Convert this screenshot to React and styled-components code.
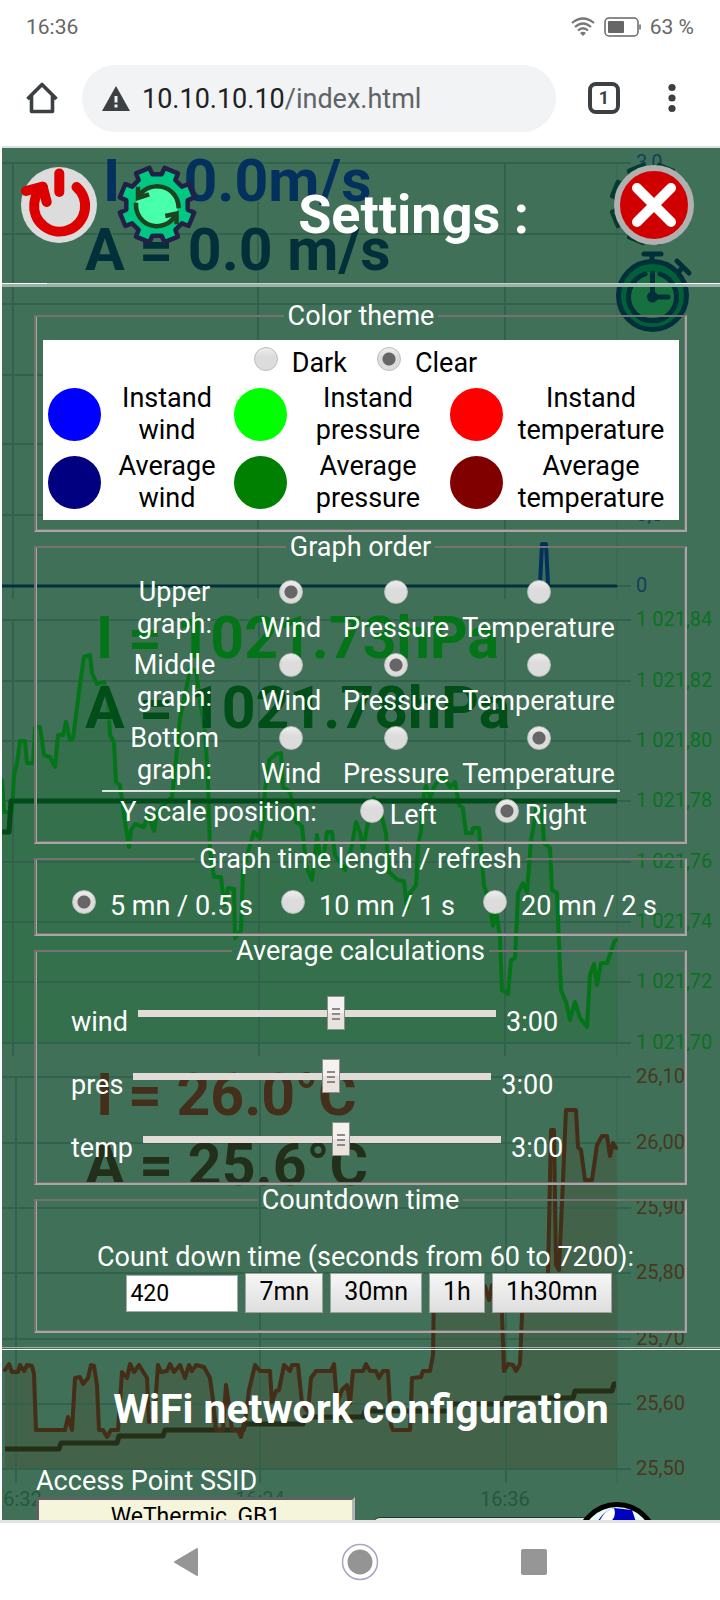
import React, { useState } from "react";
import styled, { createGlobalStyle } from "styled-components";

const GlobalStyle = createGlobalStyle`
  *, *::before, *::after { box-sizing: border-box; }
  body { margin: 0; background: #fff; font-family: Roboto, "Liberation Sans", sans-serif; }
`;

/* ---------- phone and browser chrome ---------- */

const Phone = styled.div`
  display: flex;
  flex-direction: column;
  height: 100vh;
  background: #fff;
`;

const StatusBar = styled.div`
  display: flex;
  align-items: center;
  justify-content: space-between;
  height: 54px;
  padding: 0 26px;
  color: #666;
  font-size: 21px;
  flex: none;
`;

const StatusGroup = styled.div`
  display: flex;
  align-items: center;
  gap: 9px;
`;

const BrowserBar = styled.div`
  display: flex;
  align-items: center;
  height: 92px;
  padding: 0 32px 4px 26px;
  flex: none;
`;

const ChromeButton = styled.button`
  display: flex;
  align-items: center;
  justify-content: center;
  width: 32px;
  height: 36px;
  padding: 0;
  border: 0;
  background: none;
  flex: none;
`;

const AddressPill = styled.div`
  display: flex;
  align-items: center;
  gap: 12px;
  flex: 1;
  height: 67px;
  margin: 0 32px 0 24px;
  padding: 2px 0 0 20px;
  border-radius: 34px;
  background: #f1f3f4;
  font-size: 27px;
  color: #5f6368;
`;

const Host = styled.span`
  color: #202124;
`;

const TabCount = styled.button`
  width: 32px;
  height: 32px;
  margin-right: 36px;
  padding: 0;
  border: 4px solid #3c4043;
  border-radius: 8px;
  background: none;
  color: #3c4043;
  font: 700 18px/24px Roboto, sans-serif;
  flex: none;
`;

const NavBar = styled.nav`
  display: flex;
  align-items: center;
  justify-content: center;
  gap: 142px;
  height: 80px;
  border-top: 3px solid #e2e2e2;
  flex: none;
`;

const NavButton = styled.button`
  display: flex;
  padding: 0;
  border: 0;
  background: none;
`;

/* ---------- settings page ---------- */

const View = styled.main`
  position: relative;
  flex: 1;
  min-height: 0;
  margin-left: 2px;
  overflow: hidden;
  border-top: 2px solid #dcdfdc;
  background: #417058;
  color: #fff;
  font-size: 27px;
  line-height: 32px;
`;

const Backdrop = styled.svg`
  position: absolute;
  inset: 0;
  width: 100%;
  height: 100%;
`;

const Sheet = styled.div`
  position: relative;
`;

const Header = styled.header`
  display: flex;
  align-items: flex-start;
  gap: 20px;
  height: 135px;
  padding: 17px 26px 0 19px;
`;

const IconButton = styled.button`
  display: flex;
  align-items: center;
  height: 80px;
  padding: 0;
  border: 0;
  background: none;
  flex: none;
`;

const Title = styled.h1`
  flex: 1;
  margin: 0;
  padding: 20px 0 0 16px;
  text-align: center;
  font-size: 54px;
  line-height: 60px;
  font-weight: 700;
`;

const HeaderRule = styled.hr`
  height: 4px;
  margin: 0;
  border: 0;
  background:
    linear-gradient(#fff, #fff) left top / 45px 1px no-repeat,
    linear-gradient(#fff, #fff) right top / 45px 1px no-repeat,
    linear-gradient(#c6d4cc 1px, #9bb3a6 1px);
`;

const Rule = styled.hr`
  height: 3px;
  margin: 0;
  border: 0;
  border-top: 1px solid #a0b5aa;
  border-bottom: 1px solid #fff;
`;

const Sections = styled.div`
  padding: 14px 33px 14px 32px;
`;

const Group = styled.fieldset`
  margin: 0;
  padding: ${(p) => p.$pad};
  border: 3px groove #b4b0b0;
  border-color: #757272 #aaa6a6 #aaa6a6 #757272;
  border-style: solid;
  border-width: 2px;
  box-shadow: inset 1px 0 #aaa6a6, inset -1px 0 #757272, inset 0 -1px #757272;
  min-width: 0;
`;

const Legend = styled.legend`
  margin: 0 auto;
  padding: 0 4px;
  line-height: 30px;
`;

const Radio = styled.input.attrs({ type: "radio" })`
  appearance: none;
  width: 24px;
  height: 24px;
  margin: 0;
  border: 1px solid #bcbcbc;
  border-radius: 50%;
  background: ${(p) =>
    p.checked
      ? "radial-gradient(circle, #666 0 6px, transparent 7px), linear-gradient(#eee, #dcdcdc 40%)"
      : "linear-gradient(#eee, #dcdcdc 40%)"};
  flex: none;
`;

const Choice = styled.label`
  display: flex;
  align-items: flex-start;
  gap: ${(p) => p.$gap}px;
`;

const ChoiceRow = styled.div`
  display: flex;
  justify-content: center;
  gap: ${(p) => p.$gap}px;
  padding: ${(p) => p.$pad};
`;

const ThemePanel = styled.div`
  height: 180px;
  background: #fff;
  color: #000;
`;

const SwatchGrid = styled.div`
  display: grid;
  grid-template-columns: 62fr 124fr 62fr 154fr 62fr 168fr;
  grid-auto-rows: 68px;
  align-items: center;
  justify-items: center;
  padding-right: 4px;
  text-align: center;
`;

const Swatch = styled.button`
  width: 53px;
  height: 53px;
  padding: 0;
  border: 0;
  border-radius: 50%;
  background: ${(p) => p.$color};
`;

const SwatchLabel = styled.span`
  width: min-content;
`;

const OrderTable = styled.div`
  display: flex;
  flex-direction: column;
  gap: 5px;
  width: 518px;
  max-width: 100%;
  margin: 0 auto;
  border-bottom: 2px solid #dbe5df;
`;

const OrderRow = styled.div`
  display: grid;
  grid-template-columns: 146fr 87fr 123fr 162fr;
  justify-items: center;
  text-align: center;
`;

const RowName = styled.span`
  width: min-content;
`;

const StackedChoice = styled.label`
  display: flex;
  flex-direction: column;
  align-items: center;
  gap: 8px;
  padding-top: 4px;
`;

const ScaleRow = styled.div`
  display: flex;
  justify-content: center;
  padding: 7px 14px 0 0;
`;

const ScaleName = styled.span`
  margin: -3px 43px 0 0;
`;

const ScaleChoice = styled(Choice)`
  margin-right: ${(p) => p.$after || 0}px;
`;

const Sliders = styled.div`
  display: flex;
  flex-direction: column;
  gap: 22px;
`;

const SliderRow = styled.label`
  display: flex;
  align-items: flex-start;
  gap: 10px;
  height: 41px;
`;

const SliderText = styled.span`
  padding-top: 10px;
`;

const Slider = styled.input.attrs({ type: "range" })`
  appearance: none;
  flex: 0 1 358px;
  min-width: 0;
  height: 34px;
  margin: 0;
  background: none;

  &::-webkit-slider-runnable-track {
    height: 7px;
    background: #e2dcd8;
  }

  &::-webkit-slider-thumb {
    appearance: none;
    width: 18px;
    height: 34px;
    margin-top: -14px;
    border: 1px solid #958d88;
    background:
      linear-gradient(#8f8883, #8f8883) center 11px / 8px 2px no-repeat,
      linear-gradient(#8f8883, #8f8883) center 16px / 8px 2px no-repeat,
      linear-gradient(#8f8883, #8f8883) center 21px / 8px 2px no-repeat,
      linear-gradient(#f4f2f0 50%, #e9e3e0 50%);
  }
`;

const CountLabel = styled.label`
  display: block;
  padding-left: 10px;
  text-align: center;
`;

const CountRow = styled.div`
  display: flex;
  align-items: center;
  justify-content: center;
  gap: 7px;
  padding-left: 17px;
`;

const NumberBox = styled.input`
  width: 112px;
  height: 37px;
  padding: 0 3px;
  border: 1px solid #a9a9a9;
  background: #fff;
  color: #000;
  font: 23px Roboto, sans-serif;
`;

const PresetButton = styled.button`
  height: 40px;
  padding: 0 13px 3px;
  border: 1px solid #a0a0a0;
  background: linear-gradient(#f6f6f6, #dedede);
  color: #000;
  font: 25px Roboto, sans-serif;
`;

const WifiTitle = styled.h2`
  margin: 35px 0 32px;
  text-align: center;
  font-size: 41px;
  line-height: 48px;
  font-weight: 700;
`;

const SsidLabel = styled.label`
  display: block;
  padding-left: 34px;
`;

const SsidRow = styled.div`
  display: flex;
  align-items: flex-start;
  padding-left: 34px;
`;

const SsidInput = styled.input`
  width: 319px;
  height: 38px;
  border: 3px inset #b4b4b4;
  background: #f5f5dc;
  color: #000;
  text-align: center;
  font: 23px Roboto, sans-serif;
`;

const SsidButton = styled.button`
  width: 237px;
  height: 40px;
  margin: 20px 0 0 17px;
  border: 1px solid #12402c;
  border-radius: 8px;
  background: #e4e4e4;
`;

const GlobeButton = styled(IconButton)`
  margin: 6px 0 0 -33px;
`;

/* ---------- icons ---------- */

const GEAR = (() => {
  const pts = [];
  for (let i = 0; i < 8; i++) {
    const mid = i * 45 + 22.5;
    [[-14, 31], [-11, 38], [11, 38], [14, 31]].forEach(([d, r]) => {
      const a = ((mid + d) * Math.PI) / 180;
      pts.push(`${(40 + r * Math.sin(a)).toFixed(1)},${(40 - r * Math.cos(a)).toFixed(1)}`);
    });
  }
  return `M${pts.join("L")}Z`;
})();

const PowerIcon = () => (
  <svg width="76" height="76" viewBox="0 0 76 76" aria-hidden="true">
    <circle cx="38" cy="38" r="38" fill="#dcdcdc" />
    <g fill="none" stroke="#dc0000" strokeWidth="10" strokeLinecap="round" strokeLinejoin="round">
      <path d="M38.3 6.5V25" />
      <path d="M55.5 20A25.5 25.5 0 1 1 13.3 36Q14.500 26 21.700 19.700" />
      <path d="M5 24L21.700 19.700L25.700 35" />
    </g>
  </svg>
);

const GearIcon = () => (
  <svg width="80" height="80" viewBox="0 0 80 80" overflow="visible" aria-hidden="true">
    <path d={GEAR} fill="#00c781" stroke="#232048" strokeWidth="4.500" strokeLinejoin="round" />
    <circle cx="40" cy="40" r="21" fill="#48ffaa" />
    <g fill="none" stroke="#1d4420" strokeWidth="4.500" strokeLinecap="square">
      <path d="M61.500 41A21.500 21.500 0 0 0 22 31" />
      <path d="M21 24V33L30 30" />
      <path d="M19 40A21 21 0 0 0 58 51" />
      <path d="M59.500 57V48.500L50.500 50.500" />
    </g>
  </svg>
);

const CloseIcon = () => (
  <svg width="80" height="80" viewBox="0 0 80 80" aria-hidden="true">
    <circle cx="40" cy="40" r="37" fill="#d00000" stroke="#b0b0b0" strokeWidth="6" />
    <path d="M23 23L57 57M57 23L23 57" stroke="#fff" strokeWidth="10" strokeLinecap="round" />
  </svg>
);

const GlobeIcon = () => (
  <svg width="82" height="82" viewBox="0 0 82 82" aria-hidden="true">
    <circle cx="41" cy="41" r="38.500" fill="#e8fbf2" stroke="#000" strokeWidth="5" />
    <path d="M20 22Q28 8 38 6L56 8L60 20L50 40H24Z" fill="#0000c0" />
    <path d="M24 18Q30 7 38 6Q41 15 34 20Z" fill="#fff" />
  </svg>
);

const HomeIcon = () => (
  <svg width="32" height="32" viewBox="0 0 32 32" fill="none" stroke="#3c4043" strokeWidth="3.600" aria-hidden="true">
    <path d="M1.500 17L16 2.500L30.500 17M5.500 14V29.500H26.500V14" strokeLinejoin="round" />
  </svg>
);

const WarnIcon = () => (
  <svg width="28" height="26" viewBox="0 0 28 26" aria-hidden="true">
    <path d="M14 0L28 25H0Z" fill="#3c4043" />
    <path d="M14 10V16.500M14 18.500V21.500" stroke="#f1f3f4" strokeWidth="3" />
  </svg>
);

const WifiIcon = () => (
  <svg width="24" height="20" viewBox="0 0 24 20" fill="none" stroke="#777" strokeWidth="2.200" aria-hidden="true">
    <path d="M1 6Q12 -3 23 6M4 10Q12 3 20 10M7 13.500Q12 9 17 13.500" />
    <path d="M9 16Q12 13.500 15 16L12 19Z" fill="#777" stroke="none" />
  </svg>
);

const BatteryIcon = () => (
  <svg width="37" height="20" viewBox="0 0 37 20" aria-hidden="true">
    <rect x="1" y="1" width="33" height="18" rx="4" fill="none" stroke="#666" strokeWidth="1.500" />
    <rect x="4" y="4" width="16" height="12" rx="1" fill="#666" />
    <path d="M36 7.500V12.500" stroke="#666" strokeWidth="1.500" />
  </svg>
);

/* ---------- charts behind the settings sheet ---------- */

const PRESSURE =
  "2,780 4,812 12,812 14,775 17,763 20,741 25,741 27,763 33,763 35,727 40,727 44,755 50,757 55,767 58,735 63,735 66,722 70,740 73,738 77,708 80,684 84,657 90,655 92,673 97,684 104,682 108,700 110,735 114,742 116,782 120,785 124,815 129,847 131,830 135,824 144,827 148,815 154,831 157,813 165,803 172,797 176,760 180,718 186,690 190,669 196,671 200,700 205,732 208,780 210,850 214,877 221,877 224,905 228,888 234,889 235,938 241,930 243,870 250,845 254,832 260,838 263,820 265,790 269,760 276,754 281,753 283,787 290,792 296,822 302,826 306,865 312,880 317,835 322,868 327,832 332,832 335,855 345,870 352,845 356,822 360,832 363,850 370,810 374,798 380,810 386,833 389,872 398,880 404,881 407,908 410,893 416,885 418,846 421,830 424,793 426,786 430,798 434,787 442,775 450,787 455,782 459,805 463,808 466,833 472,833 473,828 479,828 481,850 484,885 490,905 493,926 496,910 500,938 502,990 508,994 511,960 515,958 518,893 523,883 527,892 531,840 533,830 536,808 542,810 544,843 550,848 552,890 557,893 559,943 561,990 566,1002 570,1020 575,1002 580,1018 587,1027 590,975 594,964 597,985 601,963 607,963 611,952 614,942 616,940";

const TEMPERATURE =
  "5,1370 9,1364 12,1372 18,1372 20,1365 24,1371 27,1365 32,1366 34,1374 36,1430 65,1430 68,1417 72,1430 75,1378 80,1377 83,1384 88,1378 91,1365 94,1366 97,1385 99,1430 103,1430 107,1437 111,1430 118,1430 122,1372 127,1378 130,1364 134,1372 139,1365 147,1378 149,1422 154,1420 158,1365 161,1372 167,1371 170,1364 174,1372 180,1365 185,1378 189,1365 192,1371 196,1365 204,1367 210,1378 213,1400 216,1430 223,1430 226,1385 229,1405 232,1430 238,1430 241,1437 246,1415 249,1390 255,1365 260,1371 270,1371 272,1402 276,1391 279,1390 284,1365 290,1371 292,1365 298,1365 302,1403 308,1412 311,1378 316,1371 331,1371 334,1364 337,1403 342,1390 347,1385 350,1403 353,1371 363,1371 366,1364 370,1371 376,1371 379,1378 383,1371 388,1371 391,1425 393,1430 410,1430 412,1378 421,1377 423,1371 430,1371 433,1355 434,1290 440,1286 485,1286 489,1300 492,1285 501,1285 504,1371 508,1364 513,1365 516,1371 520,1364 523,1290 540,1285 548,1275 551,1130 554,1130 556,1265 559,1270 563,1180 566,1110 576,1110 578,1147 581,1150 585,1180 592,1180 597,1145 602,1136 607,1136 610,1156 613,1143 616,1148";

const CHARTS = [
  {
    rows: [163, 234, 304, 375, 444, 515, 586], cols: [13, 258, 505, 617], bottom: 599, color: "#12405c",
    labels: [["3,0", 163], ["0,5", 515], ["0", 586]],
  },
  {
    rows: [620, 681, 741, 801, 862, 922, 982, 1043], cols: [13, 259, 505, 617], bottom: 1056, color: "#0c7022",
    labels: [
      ["1 021,84", 620], ["1 021,82", 681], ["1 021,80", 741], ["1 021,78", 801],
      ["1 021,76", 862], ["1 021,74", 922], ["1 021,72", 982], ["1 021,70", 1043],
    ],
  },
  {
    rows: [1077, 1143, 1208, 1273, 1339, 1404, 1469], cols: [16, 260, 506, 617], bottom: 1483, color: "#49371e",
    labels: [
      ["26,10", 1077], ["26,00", 1143], ["25,90", 1208], ["25,80", 1273],
      ["25,70", 1339], ["25,60", 1404], ["25,50", 1469],
    ],
  },
];

const READINGS = [
  [103, 201, "#03305c", "I = 0.0m/s"],
  [85, 270, "#01303a", "A = 0.0 m/s"],
  [96, 658, "#037518", "I = 1021.73hPa"],
  [85, 728, "#014f18", "A = 1021.78hPa"],
  [96, 1115, "#432f1b", "I = 26.0°C"],
  [85, 1185, "#22301b", "A = 25.6°C"],
];

const Charts = () => (
  <Backdrop viewBox="2 148 718 1372" preserveAspectRatio="xMinYMin slice" fontFamily="Roboto, sans-serif">
    <polygon points={`2,1043 ${PRESSURE} 617,1043`} fill="#34704c" />
    <polygon points={`5,1469 ${TEMPERATURE} 617,1469`} fill="#42624a" />
    {CHARTS.map((c) => (
      <g key={c.bottom} stroke="#32624b" strokeWidth="2">
        {c.rows.map((y) => <path key={y} d={`M2 ${y}H631`} />)}
        {c.cols.map((x) => <path key={x} d={`M${x} ${c.rows[0]}V${c.bottom}`} strokeOpacity={x === 617 ? 0.35 : 1} />)}
      </g>
    ))}
    <g fill="none" strokeLinejoin="round" strokeLinecap="round">
      <path d="M540 585L542 544H546L548 585" stroke="#03305c" strokeWidth="4" />
      <path d="M2 586H616" stroke="#02303c" strokeWidth="3" />
      <polyline points={PRESSURE} stroke="#037518" strokeWidth="4" />
      <path d="M2 832H9L11 801H617" stroke="#014b18" strokeWidth="5" strokeLinecap="butt" />
      <path
        d="M5 1449H59L61 1443H117L119 1436H163L165 1430H243L245 1424H303L305 1417H363L365 1411H450L452 1404H504L506 1398H573L575 1391H612L614 1384H616"
        stroke="#252f17" strokeWidth="5" strokeLinecap="butt"
      />
      <polyline points={TEMPERATURE} stroke="#452e18" strokeWidth="4" />
    </g>
    <g fontSize="59" fontWeight="700" stroke="#417058" strokeOpacity="0.4" strokeWidth="4" paintOrder="stroke">
      {READINGS.map(([x, y, fill, text]) => <text key={text} x={x} y={y} fill={fill}>{text}</text>)}
    </g>
    <g fontSize="20">
      {CHARTS.map((c) => c.labels.map(([text, y]) => (
        <text key={text} x="636" y={y + 6} fill={c.color}>{text}</text>
      )))}
      <g fill="#24583e">
        <text x="-8" y="1506">16:32</text>
        <text x="235" y="1506">16:34</text>
        <text x="480" y="1506">16:36</text>
      </g>
    </g>
    <g transform="translate(609 162) scale(1.05)">
      <path d={GEAR} fill="none" stroke="#063c2c" strokeWidth="4" strokeLinejoin="round" />
    </g>
    <g fill="none" stroke="#02303a" strokeWidth="5" strokeLinecap="round">
      <path d="M644 254H661M652 254V262" />
      <path d="M677 261L689 273M683 267L676 275" />
      <circle cx="652.500" cy="295.500" r="34" fill="#00603a" />
      <circle cx="652.500" cy="296" r="24" fill="#17713f" stroke="none" />
      <path d="M645 274A24 24 0 1 0 660 274" />
      <path d="M652.500 273V297H668" />
      <circle cx="652.500" cy="297" r="3" fill="#02303a" />
    </g>
  </Backdrop>
);

/* ---------- application ---------- */

const SWATCHES = [
  ["Instand wind", "#0000ff"], ["Instand pressure", "#00ff00"], ["Instand temperature", "#ff0000"],
  ["Average wind", "#000080"], ["Average pressure", "#008000"], ["Average temperature", "#800000"],
];
const SERIES = ["Wind", "Pressure", "Temperature"];
const PRESETS = [["7mn", 420], ["30mn", 1800], ["1h", 3600], ["1h30mn", 5400]];

export default function App() {
  const [theme, setTheme] = useState("Clear");
  const [order, setOrder] = useState({ Upper: "Wind", Middle: "Pressure", Bottom: "Temperature" });
  const [side, setSide] = useState("Right");
  const [span, setSpan] = useState("5 mn / 0.5 s");
  const [averages, setAverages] = useState({ wind: 180, pres: 180, temp: 180 });
  const [countdown, setCountdown] = useState("420");
  const [ssid, setSsid] = useState("WeThermic_GB1");

  return (
    <Phone>
      <GlobalStyle />
      <StatusBar>
        <span>16:36</span>
        <StatusGroup>
          <WifiIcon />
          <BatteryIcon />
          <span>63 %</span>
        </StatusGroup>
      </StatusBar>
      <BrowserBar>
        <ChromeButton aria-label="Home"><HomeIcon /></ChromeButton>
        <AddressPill>
          <WarnIcon />
          <span><Host>10.10.10.10</Host>/index.html</span>
        </AddressPill>
        <TabCount aria-label="Open tabs">1</TabCount>
        <ChromeButton aria-label="Menu">
          <svg width="8" height="30" viewBox="0 0 8 30" fill="#3c4043" aria-hidden="true">
            <circle cx="4" cy="4.500" r="3.600" /><circle cx="4" cy="15" r="3.600" /><circle cx="4" cy="25.500" r="3.600" />
          </svg>
        </ChromeButton>
      </BrowserBar>

      <View>
        <Charts />
        <Sheet>
          <Header>
            <IconButton aria-label="Restart"><PowerIcon /></IconButton>
            <IconButton aria-label="Update"><GearIcon /></IconButton>
            <Title>Settings :</Title>
            <IconButton aria-label="Close"><CloseIcon /></IconButton>
          </Header>
          <HeaderRule />
          <Sections>
            <Group $pad="9px 6px 10px 7px">
              <Legend>Color theme</Legend>
              <ThemePanel>
                <ChoiceRow $gap={30} $pad="7px 0 1px 9px">
                  {["Dark", "Clear"].map((name) => (
                    <Choice key={name} $gap={14}>
                      <Radio name="theme" checked={theme === name} onChange={() => setTheme(name)} />
                      {name}
                    </Choice>
                  ))}
                </ChoiceRow>
                <SwatchGrid>
                  {SWATCHES.map(([name, color]) => (
                    <React.Fragment key={name}>
                      <Swatch $color={color} aria-label={name} />
                      <SwatchLabel>{name}</SwatchLabel>
                    </React.Fragment>
                  ))}
                </SwatchGrid>
              </ThemePanel>
            </Group>

            <Group $pad="14px 0 11px">
              <Legend>Graph order</Legend>
              <OrderTable>
                {Object.keys(order).map((slot) => (
                  <OrderRow key={slot} role="radiogroup" aria-label={`${slot} graph`}>
                    <RowName>{slot} graph:</RowName>
                    {SERIES.map((name) => (
                      <StackedChoice key={name}>
                        <Radio name={slot} checked={order[slot] === name} onChange={() => setOrder({ ...order, [slot]: name })} />
                        {name}
                      </StackedChoice>
                    ))}
                  </OrderRow>
                ))}
              </OrderTable>
              <ScaleRow role="radiogroup" aria-label="Y scale position">
                <ScaleName>Y scale position:</ScaleName>
                {["Left", "Right"].map((name) => (
                  <ScaleChoice key={name} $gap={6} $after={name === "Left" ? 58 : 0}>
                    <Radio name="side" checked={side === name} onChange={() => setSide(name)} />
                    {name}
                  </ScaleChoice>
                ))}
              </ScaleRow>
            </Group>

            <Group $pad="0">
              <Legend>Graph time length / refresh</Legend>
              <ChoiceRow $gap={28} $pad="16px 0 12px 8px">
                {["5 mn / 0.5 s", "10 mn / 1 s", "20 mn / 2 s"].map((name) => (
                  <Choice key={name} $gap={14}>
                    <Radio name="span" checked={span === name} onChange={() => setSpan(name)} />
                    {name}
                  </Choice>
                ))}
              </ChoiceRow>
            </Group>

            <Group $pad="30px 35px 20px">
              <Legend>Average calculations</Legend>
              <Sliders>
                {Object.keys(averages).map((key) => (
                  <SliderRow key={key}>
                    <SliderText>{key}</SliderText>
                    <Slider
                      min={10} max={316} value={averages[key]}
                      onChange={(e) => setAverages({ ...averages, [key]: Number(e.target.value) })}
                    />
                    <SliderText>
                      {Math.floor(averages[key] / 60)}:{String(averages[key] % 60).padStart(2, "0")}
                    </SliderText>
                  </SliderRow>
                ))}
              </Sliders>
            </Group>

            <Group $pad="26px 0 18px">
              <Legend>Countdown time</Legend>
              <CountLabel htmlFor="countdown">Count down time (seconds from 60 to 7200):</CountLabel>
              <CountRow>
                <NumberBox id="countdown" inputMode="numeric" value={countdown} onChange={(e) => setCountdown(e.target.value)} />
                {PRESETS.map(([name, seconds]) => (
                  <PresetButton key={name} onClick={() => setCountdown(String(seconds))}>{name}</PresetButton>
                ))}
              </CountRow>
            </Group>
          </Sections>
          <Rule />
          <WifiTitle>WiFi network configuration</WifiTitle>
          <SsidLabel htmlFor="ssid">Access Point SSID</SsidLabel>
          <SsidRow>
            <SsidInput id="ssid" value={ssid} onChange={(e) => setSsid(e.target.value)} />
            <SsidButton aria-label="Save access point" />
            <GlobeButton aria-label="Network"><GlobeIcon /></GlobeButton>
          </SsidRow>
        </Sheet>
      </View>

      <NavBar>
        <NavButton aria-label="Back">
          <svg width="26" height="30" viewBox="0 0 26 30" aria-hidden="true">
            <path d="M2 15L24 2V28Z" fill="#969696" stroke="#969696" strokeWidth="2" strokeLinejoin="round" />
          </svg>
        </NavButton>
        <NavButton aria-label="Home screen">
          <svg width="38" height="38" viewBox="0 0 38 38" aria-hidden="true">
            <circle cx="19" cy="19" r="17.500" fill="none" stroke="#aaa6c0" strokeWidth="1.500" />
            <circle cx="19" cy="19" r="12.500" fill="#949494" />
          </svg>
        </NavButton>
        <NavButton aria-label="Recent apps">
          <svg width="26" height="26" viewBox="0 0 26 26" aria-hidden="true">
            <rect width="26" height="26" rx="2" fill="#969696" />
          </svg>
        </NavButton>
      </NavBar>
    </Phone>
  );
}
